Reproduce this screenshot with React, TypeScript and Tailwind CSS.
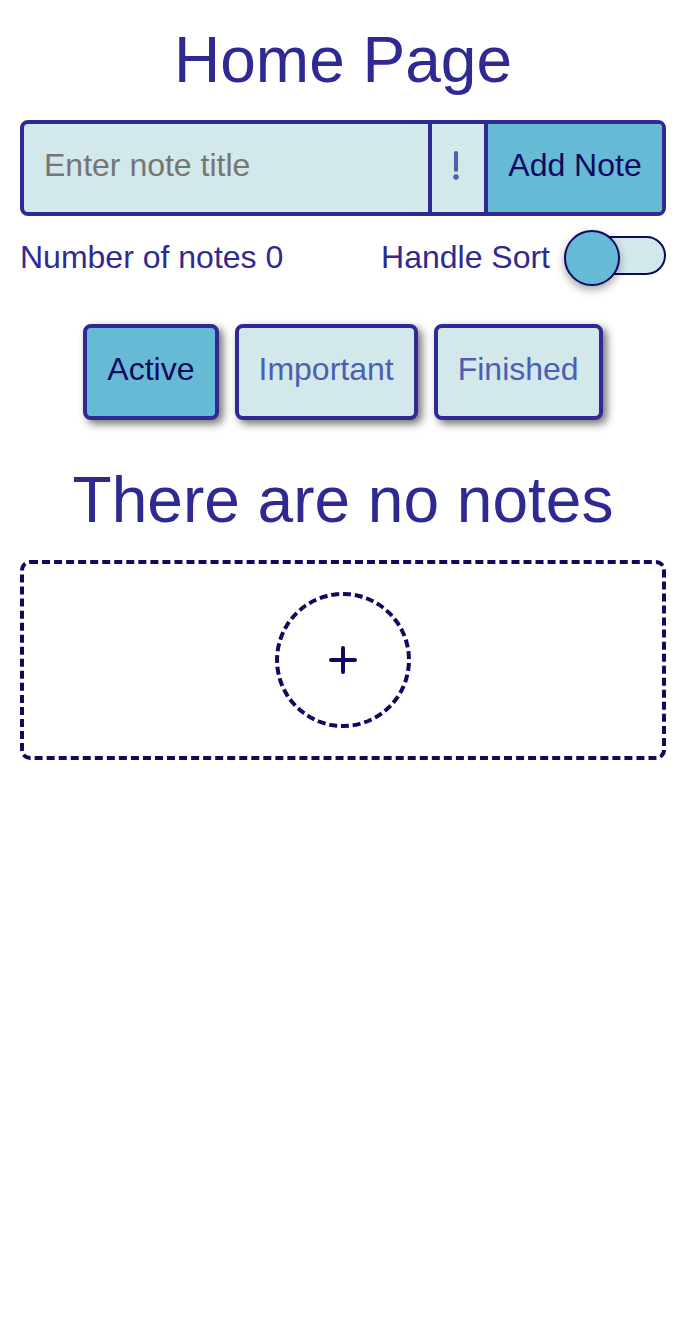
import React from "react";

export default function App() {
  return (
    <div className="min-h-[1334px] bg-white px-5 pt-6 font-['Liberation_Sans',Arial,sans-serif]">
      <h1 className="text-center text-[64px] leading-[72px] text-[#2f2a93]">Home Page</h1>

      <div className="mt-6 flex h-[96px] overflow-hidden rounded-[8px] border-4 border-[#2f2a93] bg-[#d3e8ea]">
        <input
          className="min-w-0 flex-1 bg-transparent pb-[6px] pl-5 text-[32px] text-[#2f2a93] outline-none placeholder:text-[#757575]"
          placeholder="Enter note title"
        />
        <div className="flex w-[60px] items-center justify-center border-x-4 border-[#2f2a93]">
          <svg width="8" height="32" viewBox="0 0 8 32" className="-ml-[4px] -mt-[4px]">
            <line x1="4" y1="3" x2="4" y2="20" stroke="#4b5fb2" strokeWidth="4" strokeLinecap="round" />
            <circle cx="4" cy="27" r="2.7" fill="#4b5fb2" />
          </svg>
        </div>
        <button className="w-[174px] bg-[#67bad6] pb-[6px] text-[32px] text-[#0f0a5e]">Add Note</button>
      </div>

      <div className="mt-[14px] flex h-[56px] items-center justify-between">
        <span className="pb-[2px] text-[32px] text-[#2f2a93]">Number of notes 0</span>
        <div className="flex items-center gap-[14px]">
          <span className="pb-[2px] text-[32px] text-[#2f2a93]">Handle Sort</span>
          <div className="relative h-[56px] w-[102px]">
            <div className="absolute right-0 top-[6px] h-[39px] w-[80px] rounded-full border-2 border-[#0f0a5e] bg-[#d3e8ea]" />
            <div className="absolute left-0 top-0 h-[56px] w-[56px] rounded-full border-2 border-[#0f0a5e] bg-[#67bad6] shadow-[0_4px_8px_rgba(0,0,0,0.35)]" />
          </div>
        </div>
      </div>

      <div className="mt-[38px] flex justify-center gap-4">
        <button className="h-[96px] rounded-[8px] border-4 border-[#2f2a93] bg-[#67bad6] px-5 pb-[6px] text-[32px] text-[#0f0a5e] shadow-[4px_4px_8px_rgba(0,0,0,0.55)]">
          Active
        </button>
        <button className="h-[96px] rounded-[8px] border-4 border-[#2f2a93] bg-[#d3e8ea] px-5 pb-[6px] text-[32px] text-[#4b5fb2] shadow-[4px_4px_8px_rgba(0,0,0,0.55)]">
          Important
        </button>
        <button className="h-[96px] rounded-[8px] border-4 border-[#2f2a93] bg-[#d3e8ea] px-5 pb-[6px] text-[32px] text-[#4b5fb2] shadow-[4px_4px_8px_rgba(0,0,0,0.55)]">
          Finished
        </button>
      </div>

      <h2 className="mt-[44px] text-center text-[64px] leading-[72px] text-[#2f2a93]">There are no notes</h2>

      <div className="mt-[24px] flex h-[200px] items-center justify-center rounded-[10px] border-4 border-dashed border-[#0f0a5e]">
        <div className="flex h-[136px] w-[136px] items-center justify-center rounded-full border-4 border-dashed border-[#0f0a5e]">
          <svg width="30" height="30" viewBox="0 0 30 30">
            <line x1="15" y1="3" x2="15" y2="27" stroke="#0f0a5e" strokeWidth="4" strokeLinecap="round" />
            <line x1="3" y1="15" x2="27" y2="15" stroke="#0f0a5e" strokeWidth="4" strokeLinecap="round" />
          </svg>
        </div>
      </div>
    </div>
  );
}
